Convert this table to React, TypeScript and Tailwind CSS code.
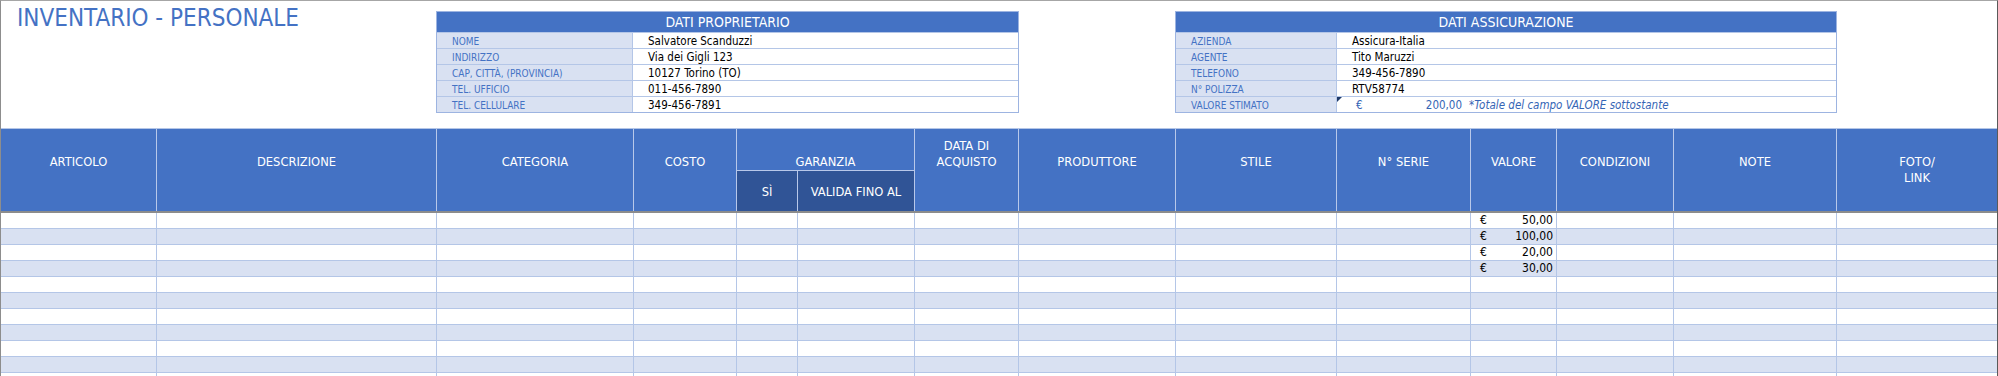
import React from 'react';

const cols =
    'grid grid-cols-[156px_280px_197px_103px_61px_117px_104px_157px_161px_134px_86px_117px_163px_1fr]';

const owner = [
    ['NOME', 'Salvatore Scanduzzi'],
    ['INDIRIZZO', 'Via dei Gigli 123'],
    ['CAP, CITTÀ, (PROVINCIA)', '10127 Torino (TO)'],
    ['TEL. UFFICIO', '011-456-7890'],
    ['TEL. CELLULARE', '349-456-7891'],
];

const insurance = [
    ['AZIENDA', 'Assicura-Italia'],
    ['AGENTE', 'Tito Maruzzi'],
    ['TELEFONO', '349-456-7890'],
    ['N° POLIZZA', 'RTV58774'],
];

const valori = ['50,00', '100,00', '20,00', '30,00', '', '', '', '', '', '', ''];

function InfoRow({ label, labelW, children }: { label: string; labelW: string; children: React.ReactNode }) {
    return (
        <div className="flex h-[16px] border-t border-[#b4c6e7]">
            <div className={`${labelW} shrink-0 bg-[#d9e1f2] border-r border-[#b4c6e7] pl-[15px] pt-[3px] text-[10px] leading-[12px] text-[#4472c4]`}>
                {label}
            </div>
            <div className="relative flex-1 bg-white pl-[15px] pt-[2px] text-[11.5px] leading-[13px] text-black">
                {children}
            </div>
        </div>
    );
}

function InfoBox({ title, width, children }: { title: string; width: string; children: React.ReactNode }) {
    return (
        <div className={`${width} shrink-0 mt-[10px] self-start border border-[#9db4e1]`}>
            <div className="h-[20px] bg-[#4472c4] text-center text-[14px] leading-[20px] text-white">{title}</div>
            {children}
        </div>
    );
}

function HeadCell({ children, top = 'pt-[25px]', last = false }: { children: React.ReactNode; top?: string; last?: boolean }) {
    return (
        <div className={`row-span-2 ${last ? '' : 'border-r border-[#b8c8ea]'} bg-[#4472c4] ${top} text-center text-[12.8px] leading-[16px] text-white`}>
            {children}
        </div>
    );
}

export default function App() {
    return (
        <div className="w-[1998px] h-[376px] overflow-hidden bg-white border-l border-t border-r border-l-[#8d8d8d] border-t-[#a6a6a6] border-r-[#5a5a5a] font-['DejaVu_Sans_Condensed','DejaVu_Sans',sans-serif]">
            {/* top section */}
            <div className="flex h-[127px]">
                <div className="w-[435px] shrink-0 pl-[16px] pt-[3px] text-[24px] leading-[28px] text-[#4472c4]">
                    INVENTARIO - PERSONALE
                </div>

                <InfoBox title="DATI PROPRIETARIO" width="w-[583px]">
                    {owner.map(([l, v]) => (
                        <InfoRow key={l} label={l} labelW="w-[196px]">{v}</InfoRow>
                    ))}
                </InfoBox>

                <div className="w-[156px] shrink-0" />

                <InfoBox title="DATI ASSICURAZIONE" width="w-[662px]">
                    {insurance.map(([l, v]) => (
                        <InfoRow key={l} label={l} labelW="w-[161px]">{v}</InfoRow>
                    ))}
                    <InfoRow label="VALORE STIMATO" labelW="w-[161px]">
                        <span className="absolute left-0 top-0 h-0 w-0 border-t-[5px] border-r-[5px] border-t-[#1f3a68] border-r-transparent" />
                        <div className="-ml-[15px] flex text-[#3565b5]">
                            <div className="flex w-[125px] justify-between pl-[19px]">
                                <span>€</span>
                                <span>200,00</span>
                            </div>
                            <span className="ml-[7px] italic">*Totale del campo VALORE sottostante</span>
                        </div>
                    </InfoRow>
                </InfoBox>
            </div>

            {/* inventory table */}
            <div className={`${cols} grid-rows-[42px_40px] border-t border-b-2 border-t-[#b4c6e7] border-b-[#8c8c8c]`}>
                <HeadCell>ARTICOLO</HeadCell>
                <HeadCell>DESCRIZIONE</HeadCell>
                <HeadCell>CATEGORIA</HeadCell>
                <HeadCell>COSTO</HeadCell>
                <div className="col-span-2 border-r border-b border-[#b8c8ea] bg-[#4472c4] pt-[25px] text-center text-[12.8px] leading-[16px] text-white">
                    GARANZIA
                </div>
                <HeadCell top="pt-[9px]">
                    DATA DI
                    <br />
                    ACQUISTO
                </HeadCell>
                <HeadCell>PRODUTTORE</HeadCell>
                <HeadCell>STILE</HeadCell>
                <HeadCell>N° SERIE</HeadCell>
                <HeadCell>VALORE</HeadCell>
                <HeadCell>CONDIZIONI</HeadCell>
                <HeadCell>NOTE</HeadCell>
                <HeadCell last>
                    FOTO/
                    <br />
                    LINK
                </HeadCell>
                <div className="col-start-5 row-start-2 border-r border-[#b8c8ea] bg-[#305496] pt-[13px] text-center text-[12.8px] leading-[16px] text-white">
                    SÌ
                </div>
                <div className="col-start-6 row-start-2 border-r border-[#b8c8ea] bg-[#305496] pt-[13px] text-center text-[12.8px] leading-[16px] text-white">
                    VALIDA FINO AL
                </div>
            </div>

            {valori.map((v, i) => (
                <div key={i} className={`${cols} h-[16px] ${i % 2 === 1 ? 'bg-[#d9e1f2]' : 'bg-white'}`}>
                    {Array.from({ length: 14 }).map((_, c) => (
                        <div key={c} className="border-r border-b border-[#b4c6e7] last:border-r-0">
                            {c === 10 && v !== '' && (
                                <div className="flex justify-between pl-[9px] pr-[3px] text-[12px] leading-[15px] text-black">
                                    <span>€</span>
                                    <span>{v}</span>
                                </div>
                            )}
                        </div>
                    ))}
                </div>
            ))}
        </div>
    );
}
